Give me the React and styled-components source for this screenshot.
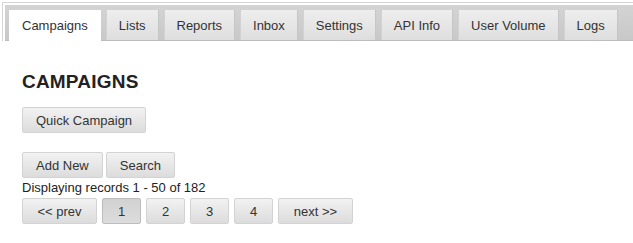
import * as React from "react"
import styled, { createGlobalStyle } from 'styled-components';

// styles
const GlobalStyle = createGlobalStyle`
  body{
    margin:0;
    background:#fff;
    font-family:"Liberation Sans", Arial, sans-serif;
    font-size:13px;
    color:#222;
  }
`;
const TabsFrame = styled.div`
  margin:2px 0 0 2px;
  padding:2px 0 0 2px;
  border-top:1px solid #d6d6d6;
  border-left:1px solid #d6d6d6;
  overflow:hidden;
`;
const TabBar = styled.ul`
  display:flex;
  gap:5px;
  list-style:none;
  margin:0;
  padding:5px 0 0 4px;
  height:30px;
  background:linear-gradient(#d4d4d4, #c8c8c8);
  border-bottom:1px solid #bdbdbd;
`;
const Tab = styled.li`
  display:flex;
  align-items:center;
  flex-shrink:0;
  white-space:nowrap;
  padding:0 12px;
  box-sizing:border-box;
  color:#333;
  font-size:13px;
  background:${p => p.$active ? '#fff' : 'linear-gradient(#eeeeee, #dedede)'};
  border-left:1px solid ${p => p.$active ? '#fff' : '#d2d2d2'};
  border-right:1px solid ${p => p.$active ? '#fff' : '#c6c6c6'};
  height:${p => p.$active ? '31px' : '30px'};
  margin-bottom:${p => p.$active ? '-1px' : '0'};
`;
const Content = styled.main`
  padding:30px 0 0 22px;
`;
const Heading = styled.h2`
  margin:0 0 14px;
  font-size:19px;
  line-height:22px;
  font-weight:700;
  letter-spacing:0.2px;
  color:#222;
`;
const Row = styled.div`
  display:flex;
  gap:${p => p.$gap || 3}px;
  margin-top:${p => p.$top || 0}px;
`;
const Button = styled.button`
  height:26px;
  width:${p => p.$width ? p.$width + 'px' : 'auto'};
  padding:${p => p.$width ? '0' : '0 13px'};
  font-family:"Liberation Sans", Arial, sans-serif;
  font-size:13px;
  color:#333;
  border:1px solid ${p => p.$pressed ? '#bcbcbc' : '#d3d3d3'};
  border-radius:2px;
  background:${p => p.$pressed ? 'linear-gradient(#d2d2d2, #dcdcdc)' : 'linear-gradient(#f2f2f2, #dcdcdc)'};
  cursor:pointer;
`;
const Records = styled.div`
  margin-top:2px;
  line-height:16px;
  color:#222;
`;

const tabs = ['Campaigns', 'Lists', 'Reports', 'Inbox', 'Settings', 'API Info', 'User Volume', 'Logs'];

const App = () => {
  return (
    <>
      <GlobalStyle />
      <TabsFrame>
        <TabBar>
          {tabs.map((t, i) => (
            <Tab key={t} $active={i === 0}>{t}</Tab>
          ))}
        </TabBar>
      </TabsFrame>
      <Content>
        <Heading>CAMPAIGNS</Heading>
        <Row>
          <Button>Quick Campaign</Button>
        </Row>
        <Row $top={19}>
          <Button>Add New</Button>
          <Button>Search</Button>
        </Row>
        <Records>Displaying records 1 - 50 of 182</Records>
        <Row $gap={5} $top={2}>
          <Button $width={75}>&lt;&lt; prev</Button>
          <Button $width={39} $pressed>1</Button>
          <Button $width={39}>2</Button>
          <Button $width={39}>3</Button>
          <Button $width={39}>4</Button>
          <Button $width={75}>next &gt;&gt;</Button>
        </Row>
      </Content>
    </>
  )
}

export default App
